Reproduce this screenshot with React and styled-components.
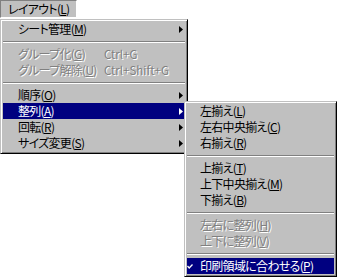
import React from 'react';
import styled, { createGlobalStyle, css } from 'styled-components';

const GlobalStyle = createGlobalStyle`
  html, body {
    margin: 0;
    background: #ffffff;
  }
  body {
    font-family: "Noto Sans CJK JP", "Liberation Sans", sans-serif;
    font-size: 12px;
    font-feature-settings: "palt";
    color: #000000;
  }
`;

const face = '#c0c0c0';
const shadow = '#808080';
const navy = '#000080';

const Screen = styled.div`
  position: relative;
  width: 337px;
  height: 278px;
  overflow: hidden;
`;

const MenuBar = styled.div`
  display: flex;
  height: 19px;
`;

const BarItem = styled.div`
  box-sizing: border-box;
  height: 18px;
  padding: 0 7px 0 7px;
  background: ${face};
  border-top: 1px solid ${shadow};
  border-left: 1px solid ${shadow};
  border-right: 1px solid #ffffff;
  border-bottom: 1px solid #ffffff;
  line-height: 15px;
  letter-spacing: -0.7px;
  white-space: nowrap;
`;

const raised = css`
  background: ${face};
  border: 1px solid;
  border-color: ${face} #000000 #000000 ${face};
  box-shadow: inset 1px 1px 0 #ffffff, inset -1px -1px 0 ${shadow};
`;

const Menu = styled.div`
  ${raised};
  box-sizing: border-box;
  width: ${(p) => p.$width}px;
  padding: 1px 2px 2px;
  display: flex;
  flex-direction: column;
`;

const Popup = styled(Menu)`
  position: absolute;
  left: ${(p) => p.$left}px;
  top: ${(p) => p.$top}px;
`;

const Item = styled.div`
  display: grid;
  grid-template-columns: ${(p) => p.$gutter}px 86px 1fr 4px;
  align-items: center;
  height: 16px;
  padding-right: 2px;
  line-height: 14px;
  white-space: nowrap;
  color: #000000;
  ${(p) =>
    p.$active &&
    css`
      background: ${navy};
      color: #ffffff;
    `}
  ${(p) =>
    p.$disabled &&
    css`
      color: ${shadow};
      text-shadow: 1px 1px 0 #ffffff;
    `}
`;

const Label = styled.span`
  padding-bottom: 1px;
  letter-spacing: -0.7px;
`;

const Shortcut = styled.span`
  padding-bottom: 1px;
  font-size: 11.5px;
`;

const Key = styled.span`
  text-decoration: underline;
  text-underline-offset: 1px;
`;

const Mark = styled.span`
  display: flex;
  padding-top: 1px;
`;

const Separator = styled.div`
  height: 9px;
  display: flex;
  align-items: center;

  &::before {
    content: '';
    flex: 1;
    height: 0;
    border-top: 1px solid ${shadow};
    border-bottom: 1px solid #ffffff;
  }
`;

const Arrow = () => (
  <svg width="4" height="7" viewBox="0 0 4 7">
    <polygon points="0,0 4,3.5 0,7" fill="currentColor" />
  </svg>
);

const Check = () => (
  <svg width="6" height="5" viewBox="0 0 6 5">
    <polyline points="0.5,2 2.2,4 5.5,0.5" fill="none" stroke="currentColor" strokeWidth="1.3" />
  </svg>
);

const text = (label, key) => (
  <>
    {label}(<Key>{key}</Key>)
  </>
);

const mainItems = [
  { label: 'シート管理', key: 'M', arrow: true },
  { sep: true },
  { label: 'グループ化', key: 'G', shortcut: 'Ctrl+G', disabled: true },
  { label: 'グループ解除', key: 'U', shortcut: 'Ctrl+Shift+G', disabled: true },
  { sep: true },
  { label: '順序', key: 'O', arrow: true },
  { label: '整列', key: 'A', arrow: true, active: true },
  { label: '回転', key: 'R', arrow: true },
  { label: 'サイズ変更', key: 'S', arrow: true },
];

const alignItems = [
  { label: '左揃え', key: 'L' },
  { label: '左右中央揃え', key: 'C' },
  { label: '右揃え', key: 'R' },
  { sep: true },
  { label: '上揃え', key: 'T' },
  { label: '上下中央揃え', key: 'M' },
  { label: '下揃え', key: 'B' },
  { sep: true },
  { label: '左右に整列', key: 'H', disabled: true },
  { label: '上下に整列', key: 'V', disabled: true },
  { sep: true },
  { label: '印刷領域に合わせる', key: 'P', active: true, checked: true },
];

const MenuList = ({ items, gutter }) =>
  items.map((it, i) =>
    it.sep ? (
      <Separator key={i} />
    ) : (
      <Item key={i} $gutter={gutter} $active={it.active} $disabled={it.disabled}>
        <Mark>{it.checked && <Check />}</Mark>
        <Label>{text(it.label, it.key)}</Label>
        <Shortcut>{it.shortcut}</Shortcut>
        {it.arrow ? <Arrow /> : <span />}
      </Item>
    )
  );

export default function App() {
  return (
    <>
      <GlobalStyle />
      <Screen>
        <MenuBar>
          <BarItem>{text('レイアウト', 'L')}</BarItem>
        </MenuBar>
        <Menu $width={188}>
          <MenuList items={mainItems} gutter={15} />
        </Menu>
        <Popup $width={153} $left={184} $top={101}>
          <MenuList items={alignItems} gutter={13} />
        </Popup>
      </Screen>
    </>
  );
}
